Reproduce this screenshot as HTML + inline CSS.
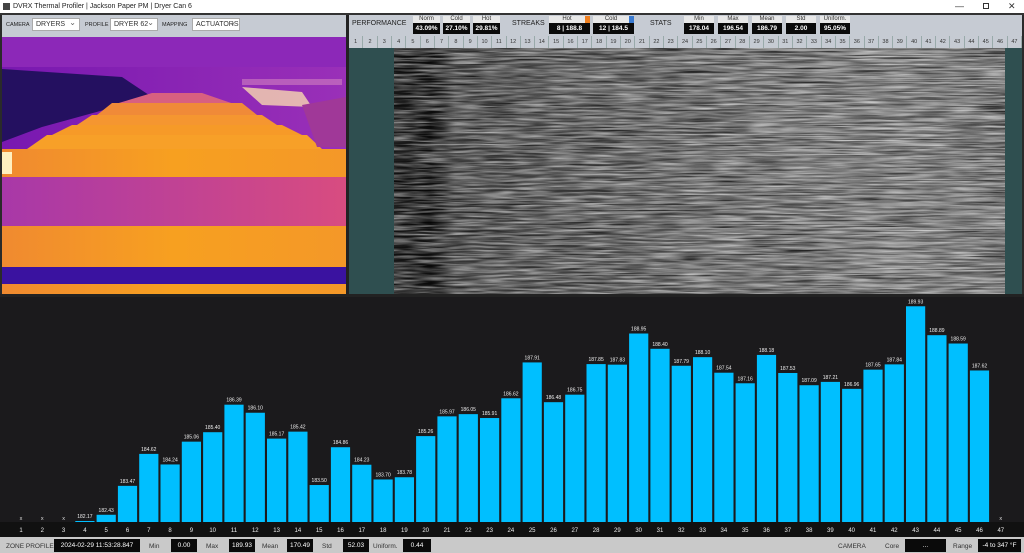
<!DOCTYPE html>
<html><head><meta charset="utf-8">
<style>
*{margin:0;padding:0;box-sizing:border-box}
body{width:1024px;height:553px;overflow:hidden;background:#2a2a2a;font-family:"Liberation Sans",sans-serif;position:relative}
.abs{position:absolute}
.t{position:absolute;font-size:7px;color:#222;white-space:nowrap}
.lab{position:absolute;background:#e8e8e8;font-size:6px;color:#333;text-align:center;height:7px;line-height:7px}
.val{position:absolute;background:#0a0a0a;color:#fff;font-size:6.5px;font-weight:bold;text-align:center;height:11px;line-height:11px}
.sel{position:absolute;background:#fff;border:1px solid #aaa;font-size:7px;color:#333;height:13px;line-height:11px;padding-left:3px}
.sel:after{content:"⌄";position:absolute;right:3px;top:-2px;font-size:8px;color:#666}
.sb{position:absolute;background:#0a0a0a;color:#fff;font-size:6.5px;text-align:center;height:13px;line-height:13px;top:539px}
.sl{position:absolute;font-size:6.5px;color:#333;top:543px}
</style></head><body>
<div class="abs" style="left:0;top:0;width:1024px;height:13px;background:#fff"></div>
<div class="abs" style="left:3px;top:3px;width:7px;height:7px;background:#444"></div>
<div class="t" style="left:13px;top:3px;font-size:7px;color:#222">DVRX Thermal Profiler | Jackson Paper PM | Dryer Can 6</div>
<div class="t" style="left:955px;top:1px;font-size:9px;color:#333">—</div>
<div class="abs" style="left:983px;top:3px;width:6px;height:6px;border:1px solid #333"></div>
<div class="t" style="left:1008px;top:1px;font-size:9px;color:#333">✕</div>
<div class="abs" style="left:0;top:13px;width:1024px;height:2px;background:#333"></div>

<div class="abs" style="left:2px;top:15px;width:344px;height:22px;background:#c6cbd3"></div>
<div class="t" style="left:6px;top:22px;font-size:5.5px">CAMERA</div>
<div class="sel" style="left:32px;top:18px;width:48px">DRYERS</div>
<div class="t" style="left:85px;top:22px;font-size:5.5px">PROFILE</div>
<div class="sel" style="left:110px;top:18px;width:48px">DRYER 62</div>
<div class="t" style="left:162px;top:22px;font-size:5.5px">MAPPING</div>
<div class="sel" style="left:192px;top:18px;width:48px">ACTUATORS</div>

<svg class="abs" style="left:2px;top:37px" width="344" height="257" viewBox="0 0 344 257">
<defs>
<linearGradient id="pg" x1="0" x2="1"><stop offset="0" stop-color="#7818b0"/><stop offset="1" stop-color="#9a30b8"/></linearGradient>
<linearGradient id="mg" x1="0" x2="1"><stop offset="0" stop-color="#a838a8"/><stop offset="1" stop-color="#d84c80"/></linearGradient>
<linearGradient id="og" x1="0" x2="1"><stop offset="0" stop-color="#f08a30"/><stop offset=".5" stop-color="#f7a020"/><stop offset="1" stop-color="#f49828"/></linearGradient>
</defs>
<rect width="344" height="257" fill="url(#pg)"/>
<rect y="0" width="344" height="30" fill="#8c28b8"/>
<polygon points="0,32 120,40 150,60 120,68 40,90 0,105" fill="#241060"/>
<rect x="240" y="42" width="100" height="6" fill="#d080c0" opacity=".6"/>
<polygon points="150,56 200,56 235,68 110,68" fill="#d86080"/>
<polygon points="110,66 240,66 255,78 95,78" fill="#f08a38"/>
<polygon points="90,78 260,78 275,88 75,88" fill="#f59630"/>
<polygon points="70,88 280,88 300,98 50,98" fill="#f69a28"/>
<polygon points="45,98 305,98 320,112 25,112" fill="#f7a028"/>
<polygon points="240,50 300,55 310,70 260,68" fill="#f8d8b0" opacity=".8"/>
<polygon points="300,68 344,60 344,110 315,110" fill="#a03898"/>
<rect x="0" y="112" width="344" height="28" fill="url(#og)"/>
<rect x="0" y="115" width="10" height="22" fill="#fff0c0"/>
<rect x="0" y="140" width="344" height="49" fill="url(#mg)"/>
<rect x="0" y="189" width="344" height="41" fill="url(#og)"/>
<rect x="0" y="230" width="344" height="17" fill="#3a12a0"/>
<rect x="0" y="247" width="344" height="10" fill="url(#og)"/>
</svg>
<div class="abs" style="left:346px;top:15px;width:3px;height:280px;background:#222"></div>

<div class="abs" style="left:349px;top:15px;width:673px;height:21px;background:#c6cbd3"></div>
<div class="t" style="left:352px;top:20px;font-size:7px">PERFORMANCE</div>
<div class="lab" style="left:413px;top:16px;width:27px">Norm</div><div class="val" style="left:413px;top:23px;width:27px">43.09%</div>
<div class="lab" style="left:443px;top:16px;width:27px">Cold</div><div class="val" style="left:443px;top:23px;width:27px">27.10%</div>
<div class="lab" style="left:473px;top:16px;width:27px">Hot</div><div class="val" style="left:473px;top:23px;width:27px">29.81%</div>
<div class="t" style="left:512px;top:20px;font-size:7px">STREAKS</div>
<div class="lab" style="left:549px;top:16px;width:36px">Hot</div><div class="abs" style="left:585px;top:16px;width:5px;height:7px;background:#f08020"></div><div class="val" style="left:549px;top:23px;width:41px">8 | 188.8</div>
<div class="lab" style="left:593px;top:16px;width:36px">Cold</div><div class="abs" style="left:629px;top:16px;width:5px;height:7px;background:#3a7ad0"></div><div class="val" style="left:593px;top:23px;width:41px">12 | 184.5</div>
<div class="t" style="left:650px;top:20px;font-size:7px">STATS</div>
<div class="lab" style="left:684px;top:16px;width:30px">Min</div><div class="val" style="left:684px;top:23px;width:30px">178.04</div>
<div class="lab" style="left:718px;top:16px;width:30px">Max</div><div class="val" style="left:718px;top:23px;width:30px">196.54</div>
<div class="lab" style="left:752px;top:16px;width:30px">Mean</div><div class="val" style="left:752px;top:23px;width:30px">186.79</div>
<div class="lab" style="left:786px;top:16px;width:30px">Std</div><div class="val" style="left:786px;top:23px;width:30px">2.00</div>
<div class="lab" style="left:820px;top:16px;width:30px">Uniform.</div><div class="val" style="left:820px;top:23px;width:30px">95.05%</div>
<div id="cols" class="abs" style="left:349px;top:36px;width:673px;height:12px;background:#c6cbd3"></div>

<svg class="abs" style="left:349px;top:48px" width="673" height="247">
<defs>
<filter id="n" x="0" y="0" width="100%" height="100%">
<feTurbulence type="fractalNoise" baseFrequency="0.01 0.8" numOctaves="2" seed="4"/>
<feColorMatrix type="matrix" values="0 0 0 0 0  0 0 0 0 0  0 0 0 0 0  1.8 0 0 0 -0.5"/>
</filter>
<filter id="w" x="0" y="0" width="100%" height="100%">
<feTurbulence type="fractalNoise" baseFrequency="0.03 0.5" numOctaves="2" seed="9"/>
<feColorMatrix type="matrix" values="0 0 0 0 1  0 0 0 0 1  0 0 0 0 1  1.8 0 0 0 -0.6"/>
</filter>
<linearGradient id="hg" x1="0" x2="1">
<stop offset="0" stop-color="#222"/><stop offset=".06" stop-color="#111"/><stop offset=".1" stop-color="#555"/><stop offset=".3" stop-color="#6a6a6a"/><stop offset=".6" stop-color="#888"/><stop offset=".85" stop-color="#9a9a9a"/><stop offset="1" stop-color="#888"/>
</linearGradient>
</defs>
<rect width="673" height="247" fill="#2f4f50"/>
<rect x="45" width="611" height="247" fill="url(#hg)"/>
<rect x="45" width="611" height="247" filter="url(#n)" opacity=".8"/>
<rect x="45" width="611" height="247" filter="url(#w)" opacity=".6"/>
</svg>
<div class="abs" style="left:0;top:294px;width:1024px;height:3px;background:#222"></div>

<svg id="chart" class="abs" style="left:0;top:297px" width="1024" height="240"></svg>

<div class="abs" style="left:0;top:537px;width:1024px;height:16px;background:#c9c9c9"></div>
<div class="sl" style="left:6px">ZONE PROFILE</div>
<div class="sb" style="left:54px;width:86px">2024-02-29 11:53:28.847</div>
<div class="sl" style="left:149px">Min</div><div class="sb" style="left:171px;width:26px">0.00</div>
<div class="sl" style="left:206px">Max</div><div class="sb" style="left:229px;width:26px">189.93</div>
<div class="sl" style="left:262px">Mean</div><div class="sb" style="left:287px;width:26px">170.49</div>
<div class="sl" style="left:322px">Std</div><div class="sb" style="left:343px;width:26px">52.03</div>
<div class="sl" style="left:373px">Uniform.</div><div class="sb" style="left:403px;width:28px">0.44</div>
<div class="sl" style="left:838px">CAMERA</div>
<div class="sl" style="left:885px">Core</div><div class="sb" style="left:905px;width:41px">...</div>
<div class="sl" style="left:953px">Range</div><div class="sb" style="left:978px;width:43px">-4 to 347 °F</div>

<script>
var c=document.getElementById('cols'),h='';
for(var i=0;i<47;i++){h+='<div style="position:absolute;left:'+(i*14.32)+'px;top:0;width:14.32px;height:12px;border-right:1px solid #9aa;font-size:5.5px;line-height:12px;text-align:center;color:#333">'+(i+1)+'</div>';}
c.innerHTML=h;
var v=[null,null,null,182.17,182.43,183.47,184.62,184.24,185.06,185.40,186.39,186.10,185.17,185.42,183.50,184.86,184.23,183.70,183.78,185.26,185.97,186.05,185.91,186.62,187.91,186.48,186.75,187.85,187.83,188.95,188.40,187.79,188.10,187.54,187.16,188.18,187.53,187.09,187.21,186.96,187.65,187.84,189.93,188.89,188.59,187.62,null];
var s='<rect x="0" y="0" width="1024" height="240" fill="#1b1a1c"/><rect x="0" y="225" width="1024" height="15" fill="#111"/>';
for(var i=0;i<47;i++){var cx=21+i*21.3;
 if(v[i]===null){s+='<text x="'+cx+'" y="223" fill="#ddd" font-size="5.5" text-anchor="middle">x</text>';}
 else{var hh=Math.max(1,(v[i]-182.17)*27.8);var y=225-hh;
 s+='<rect x="'+(cx-9.6)+'" y="'+y+'" width="19.2" height="'+hh+'" fill="#00bfff"/>';
 s+='<text x="'+cx+'" y="'+(y-3)+'" fill="#eee" font-size="5" text-anchor="middle">'+v[i].toFixed(2)+'</text>';}
 s+='<text x="'+cx+'" y="235" fill="#eee" font-size="6" text-anchor="middle">'+(i+1)+'</text>';}
document.getElementById('chart').innerHTML=s;
</script>
</body></html>
